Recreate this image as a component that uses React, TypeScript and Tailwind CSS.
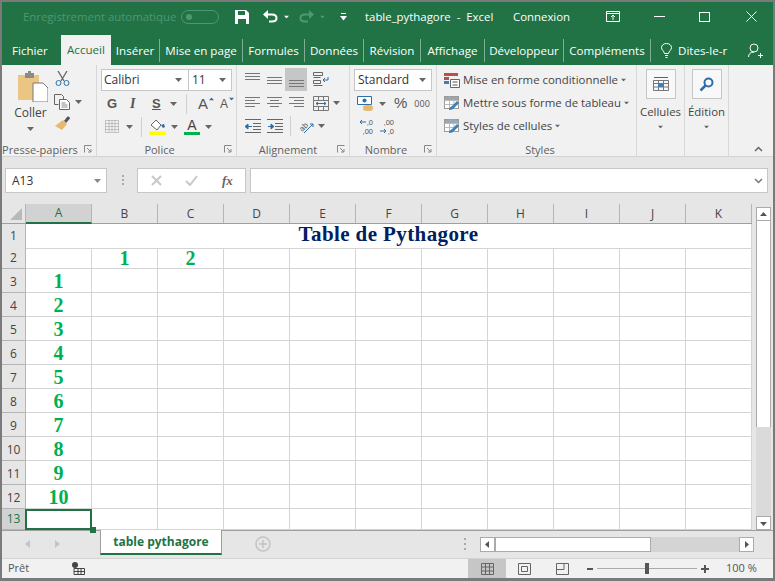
import React from "react";

const ui = "font-['Open_Sans','Noto_Sans',sans-serif]";

const Caret = ({ className = "", color = "#666" }: { className?: string; color?: string }) => (
  <svg width="7" height="4" viewBox="0 0 7 4" className={`shrink-0 ${className}`}>
    <path d="M0 0h7L3.5 4z" fill={color} />
  </svg>
);

const Lines = ({ kind }: { kind: "left" | "center" | "right" | "top" | "middle" | "bottom" }) => {
  const rows: [number, number][] =
    kind === "left"
      ? [[0, 15], [0, 10], [0, 15], [0, 10]]
      : kind === "center"
        ? [[0, 15], [3, 12], [0, 15], [3, 12]]
        : kind === "right"
          ? [[0, 15], [5, 15], [0, 15], [5, 15]]
          : [[0, 15], [0, 15], [0, 15]];
  const start = kind === "top" ? 0 : kind === "middle" ? 4 : kind === "bottom" ? 7 : 1;
  return (
    <svg width="15" height="14" viewBox="0 0 15 14">
      {rows.map(([a, b], i) => (
        <path key={i} d={`M${a} ${start + i * 3 + 0.5}H${b}`} stroke="#777" strokeWidth="1" />
      ))}
    </svg>
  );
};

const Indent = ({ flip }: { flip?: boolean }) => (
  <svg width="16" height="14" viewBox="0 0 16 14">
    <path d="M0 .5h16M8 4.500h8M8 7.500h8M8 10.500h8M0 13.500h16" stroke="#666" />
    <path d={flip ? "M1 7.500h4M7 7.500 4 5v5z" : "M3 7.500h4M0 7.500 3 5v5z"} stroke="#2b6ea8" fill="#2b6ea8" />
  </svg>
);

const StyleIcon = () => (
  <svg width="16" height="16" viewBox="0 0 16 16" className="shrink-0">
    <rect x=".5" y="1.500" width="14" height="12" fill="#fff" stroke="#999" />
    <path d="M.5 5.500h14M.5 9.500h14M5.500 1.500v12M10 1.500v12" stroke="#bbb" />
    <path d="M1 2h13v3H1z" fill="#9aa7b5" />
    <path d="M5 15c0-3 2-3 3-4l5-5 2 2-5 5c-1 1-2 2-5 2z" fill="#3f7fb5" />
  </svg>
);

const GroupLabel = ({ children, launcher }: { children: React.ReactNode; launcher?: boolean }) => (
  <div className={`relative mt-auto flex h-[14px] items-center justify-center text-[11px] leading-none text-[#5f5f5f] ${launcher ? "pr-[18px]" : ""}`}>
    <span className="whitespace-nowrap">{children}</span>
    {launcher && (
      <svg width="8" height="8" viewBox="0 0 8 8" className="absolute right-[4px] top-[3px]">
        <path d="M.5 7.500v-7h7M3 3l4 4M7 4v3H4" fill="none" stroke="#888" />
      </svg>
    )}
  </div>
);

const cols = ["A", "B", "C", "D", "E", "F", "G", "H", "I", "J", "K"];
const rowHeights = [24, 21, 24, 24, 24, 24, 24, 24, 24, 24, 24, 24, 21];

function TitleBar() {
  return (
    <div className="flex h-[31px] items-center bg-[#217346] pb-[2px] text-[11.4px] text-white">
      <span className="ml-[21px] w-[151px] shrink-0 whitespace-nowrap text-[#4f9672]">Enregistrement automatique</span>
      <div className="ml-[7px] flex h-[14px] w-[38px] items-center rounded-full border border-[#4f9672] pl-[4px]">
        <div className="h-[6px] w-[6px] rounded-full bg-[#4f9672]" />
      </div>
      <svg width="14" height="14" viewBox="0 0 14 14" className="ml-[16px]">
        <path d="M0 0h11l3 3v11H0z" fill="#fff" />
        <path d="M3 1h7v4H3zM3 9h8v5H3z" fill="#217346" />
      </svg>
      <svg width="15" height="13" viewBox="0 0 15 13" className="ml-[14px]">
        <path d="M1 4.500h8c3 0 4.500 1.500 4.500 3.500S12 11.500 9 11.500H6" fill="none" stroke="#fff" strokeWidth="2" />
        <path d="M5 0v9L0 4.500z" fill="#fff" />
      </svg>
      <Caret color="#fff" className="ml-[5px] scale-75" />
      <svg width="15" height="13" viewBox="0 0 15 13" className="ml-[9px]">
        <path d="M14 4.500H6C3 4.500 1.500 6 1.500 8S3 11.500 6 11.500h3" fill="none" stroke="#4f9672" strokeWidth="2" />
        <path d="M10 0v9l5-4.500z" fill="#4f9672" />
      </svg>
      <Caret color="#4f9672" className="ml-[5px] scale-75" />
      <svg width="7" height="8" viewBox="0 0 7 8" className="ml-[14px]">
        <path d="M1 .5h5" stroke="#fff" />
        <path d="M0 3h7L3.500 7.500z" fill="#fff" />
      </svg>
      <span className="ml-[18px] w-[128px] shrink-0 whitespace-pre">table_pythagore  -  Excel</span>
      <span className="ml-[20px] w-[57px] shrink-0">Connexion</span>
      <svg width="14" height="11" viewBox="0 0 14 11" className="ml-[36px]">
        <path d="M.5.500h13v10H.5zM.5 2.500h13" fill="none" stroke="#fff" />
        <path d="M7 9V4.500M5 6l2-2 2 2" fill="none" stroke="#fff" />
      </svg>
      <div className="ml-[34px] h-px w-[11px] bg-white" />
      <div className="ml-[34px] h-[10px] w-[11px] border border-white" />
      <svg width="11" height="11" viewBox="0 0 11 11" className="ml-[36px]">
        <path d="M.5.500l10 10M10.500.500l-10 10" stroke="#fff" />
      </svg>
    </div>
  );
}

const tabs: [string, string][] = [
  ["Insérer", "w-[49px]"],
  ["Mise en page", "w-[83px]"],
  ["Formules", "w-[62px]"],
  ["Données", "w-[59px]"],
  ["Révision", "w-[57px]"],
  ["Affichage", "w-[64px]"],
  ["Développeur", "w-[79px]"],
  ["Compléments", "w-[87px]"],
];

function TabBar() {
  return (
    <div className="flex h-[32px] items-end bg-[#217346] text-[11.6px] text-white">
      <div className="flex h-[26px] w-[59px] shrink-0 items-center pb-[3px] pl-[10px]">Fichier</div>
      <div className="flex h-[30px] w-[50px] shrink-0 items-center justify-center bg-[#f1f1f1] text-[#217346]">Accueil</div>
      {tabs.map(([t, w]) => (
        <div key={t} className={`flex h-[26px] shrink-0 items-center pb-[3px] ${w}`}>
          <span className="flex-1 whitespace-nowrap text-center">{t}</span>
          <div className="h-[23px] w-px bg-[#7fae96]" />
        </div>
      ))}
      <div className="flex h-[26px] items-center pb-[3px]">
        <svg width="11" height="15" viewBox="0 0 11 15" className="ml-[10px]">
          <path d="M3.500 10.500C3 8 .5 7 .5 4.500a5 4 0 0 1 10 0C10.500 7 8 8 7.500 10.500zM4 12.500h3M4.500 14.500h2" fill="none" stroke="#fff" />
        </svg>
        <span className="ml-[6px] w-[50px] whitespace-nowrap">Dites-le-r</span>
        <svg width="15" height="16" viewBox="0 0 15 16" className="ml-[20px]">
          <circle cx="6" cy="5" r="4" fill="none" stroke="#fff" />
          <path d="M.5 14c0-3 2-5 5.500-5M10 12.500h5M12.500 10v5" fill="none" stroke="#fff" />
        </svg>
      </div>
    </div>
  );
}

function Clipboard() {
  return (
    <div className="flex w-[95px] flex-col border-r border-[#d8d8d8]">
      <div className="flex pl-[11px] pt-[6px]">
        <div className="flex w-[35px] flex-col items-center">
          <svg width="30" height="31" viewBox="0 0 30 31" className="ml-[4px]">
            <path d="M0 4h21v25H0z" fill="#eac583" />
            <path d="M7 2h3v-2h3v2h3v5H7z" fill="#8a8a8a" />
            <path d="M15 12h10l5 5v14H15z" fill="#fff" stroke="#777" />
          </svg>
          <span className="mt-[3px] text-[12px] leading-[16px] text-[#444]">Coller</span>
          <Caret className="mt-[6px]" />
        </div>
        <div className="ml-[6px] flex flex-col">
          <svg width="15" height="15" viewBox="0 0 15 15" className="ml-[1px]">
            <path d="M3 0l6 10M12 0 6 10" stroke="#666" strokeWidth="1.300" />
            <circle cx="3.500" cy="12" r="2.500" fill="none" stroke="#2b6ea8" />
            <circle cx="11.500" cy="12" r="2.500" fill="none" stroke="#2b6ea8" />
          </svg>
          <div className="mt-[8px] flex items-center">
            <svg width="16" height="16" viewBox="0 0 16 16">
              <path d="M.5.500h7l2 2v3M.5.500v10h4" fill="none" stroke="#666" />
              <path d="M5.500 5.500h7l3 3v7h-10z" fill="#fff" stroke="#666" />
              <path d="M7.500 9h4M7.500 11h6M7.500 13h6" stroke="#888" />
            </svg>
            <Caret className="ml-[5px]" />
          </div>
          <svg width="16" height="15" viewBox="0 0 16 15" className="ml-[1px] mt-[6px]">
            <path d="M9 5l3-4c1-1 3 0 3 1.500L11 7z" fill="#555" />
            <path d="M8 4l4 4-5 6-7-4z" fill="#e6b870" />
          </svg>
        </div>
      </div>
      <GroupLabel launcher>Presse-papiers</GroupLabel>
    </div>
  );
}

function Font() {
  return (
    <div className="flex w-[140px] flex-col border-r border-[#d8d8d8] pl-[4px]">
      <div className="mt-[4px] flex h-[22px] w-[131px] border border-[#c6c6c6] bg-white text-[12px] text-[#333]">
        <div className="flex w-[87px] items-center justify-between border-r border-[#c6c6c6] pl-[2px] pr-[6px]">
          Calibri
          <Caret />
        </div>
        <div className="flex flex-1 items-center justify-between pl-[3px] pr-[5px]">
          11
          <Caret />
        </div>
      </div>
      <div className="mt-[2px] flex h-[21px] items-center font-['Liberation_Sans',sans-serif] text-[#555]">
        <span className="ml-[6px] w-[21px] text-[13px] font-bold">G</span>
        <span className="ml-[2px] w-[22px] font-['Liberation_Serif',serif] text-[14px] font-bold italic">I</span>
        <span className="w-[18px] text-[13px] font-bold underline">S</span>
        <Caret />
        <div className="ml-[9px] h-[20px] w-px bg-[#d0d0d0]" />
        <span className="ml-[11px] text-[15px] leading-none">A</span>
        <Caret color="#2b6ea8" className="-mt-[9px] rotate-180 scale-75" />
        <span className="ml-[5px] text-[12px] leading-none">A</span>
        <Caret color="#2b6ea8" className="-mt-[9px] scale-75" />
      </div>
      <div className="mt-[2px] flex h-[21px] items-center">
        <svg width="14" height="13" viewBox="0 0 14 13" className="ml-[4px]">
          <path d="M.5.500h13v12H.5zM7 .5v12M.5 6.500h13M4 .5v12M10 .5v12M.5 3.500h13M.5 9.500h13" fill="none" stroke="#999" strokeDasharray="1 1" />
        </svg>
        <Caret className="ml-[7px]" />
        <div className="ml-[8px] h-[20px] w-px bg-[#d0d0d0]" />
        <svg width="18" height="16" viewBox="0 0 18 16" className="ml-[7px]">
          <path d="M2 6l5-5 5 5-4 5z" fill="#fff" stroke="#666" />
          <path d="M12 6l3-1 1 3-2 1z" fill="#2b6ea8" />
          <path d="M0 12.500h17V16H0z" fill="#ffff00" />
        </svg>
        <Caret className="ml-[4px]" />
        <div className="ml-[6px] flex w-[16px] flex-col items-center">
          <span className="font-['Liberation_Sans',sans-serif] text-[14px] leading-[13px] text-[#444]">A</span>
          <div className="h-[3px] w-[16px] bg-[#00b050]" />
        </div>
        <Caret className="ml-[5px]" />
      </div>
      <GroupLabel launcher>Police</GroupLabel>
    </div>
  );
}

function Alignment() {
  return (
    <div className="flex w-[113px] flex-col border-r border-[#d8d8d8] pl-[8px]">
      <div className="mt-[3px] flex h-[23px] items-center">
        <Lines kind="top" />
        <div className="ml-[7px]"><Lines kind="middle" /></div>
        <div className="ml-[3px] flex h-[23px] w-[22px] items-center justify-center bg-[#c6c6c6]"><Lines kind="bottom" /></div>
        <svg width="16" height="15" viewBox="0 0 16 15" className="ml-[6px]">
          <path d="M.5.500h9v3h-9zM.5 5.500h7M.5 8.500h7v3h-7zM.5 13.500h9" fill="none" stroke="#666" />
          <path d="M15 5v3h-5M12 6 10 8l2 2" fill="none" stroke="#2b6ea8" />
        </svg>
      </div>
      <div className="mt-[1px] flex h-[22px] items-center">
        <Lines kind="left" />
        <div className="ml-[7px]"><Lines kind="center" /></div>
        <div className="ml-[7px]"><Lines kind="right" /></div>
        <svg width="16" height="15" viewBox="0 0 16 15" className="ml-[9px]">
          <path d="M.5.500h15v14H.5zM.5 4.500h15M.5 10.500h15M5.500 .5v4M10.500 .5v4M5.500 10.500v4M10.500 10.500v4" fill="none" stroke="#777" />
          <path d="M3 7.500h10M5 6 3 7.500 5 9M11 6l2 1.500L11 9" fill="none" stroke="#2b6ea8" />
        </svg>
        <Caret className="ml-[4px]" />
      </div>
      <div className="mt-[1px] flex h-[22px] items-center">
        <Indent />
        <div className="ml-[6px]"><Indent flip /></div>
        <div className="ml-[7px] h-[20px] w-px bg-[#d0d0d0]" />
        <svg width="16" height="15" viewBox="0 0 16 15" className="ml-[7px] overflow-visible">
          <text x="1" y="11" fontSize="8" fontFamily="Liberation Sans" fill="#555" transform="rotate(-45 5 8)">ab</text>
          <path d="M6 14 15 5M12 5h3v3" fill="none" stroke="#2b6ea8" />
        </svg>
        <Caret className="ml-[4px]" />
      </div>
      <GroupLabel launcher>Alignement</GroupLabel>
    </div>
  );
}

function DecimalIcon({ more }: { more?: boolean }) {
  const arrow = (
    <svg width="7" height="6" viewBox="0 0 7 6" className="mr-px">
      <path d={more ? "M0 3h6M4 1l2 2-2 2" : "M7 3H1M3 1 1 3l2 2"} fill="none" stroke="#2b6ea8" />
    </svg>
  );
  return (
    <div className="flex w-[15px] flex-col items-end font-['Liberation_Sans',sans-serif] text-[7.5px] leading-[9px] text-[#555]">
      <div className="flex items-center">{!more && arrow}{more ? ",00" : ",0"}</div>
      <div className="flex items-center">{more && arrow}{more ? ",0" : ",00"}</div>
    </div>
  );
}

function NumberGroup() {
  return (
    <div className="flex w-[87px] flex-col border-r border-[#d8d8d8] pl-[4px]">
      <div className="mt-[4px] flex h-[22px] w-[78px] items-center justify-between border border-[#c6c6c6] bg-white pl-[3px] pr-[5px] text-[12px] text-[#333]">
        Standard
        <Caret />
      </div>
      <div className="mt-[2px] flex h-[21px] items-center">
        <svg width="17" height="15" viewBox="0 0 17 15" className="ml-[3px]">
          <path d="M.5.500h14v8H.5z" fill="#fff" stroke="#2b6ea8" />
          <circle cx="7.500" cy="4.500" r="2" fill="#2b6ea8" />
          <ellipse cx="11" cy="11" rx="5" ry="2" fill="#e6b870" />
          <ellipse cx="11" cy="13" rx="5" ry="2" fill="#e6b870" />
        </svg>
        <Caret className="ml-[5px]" />
        <span className="ml-[8px] font-['Liberation_Sans',sans-serif] text-[15px] text-[#555]">%</span>
        <span className="ml-[7px] text-[9px] text-[#555]">000</span>
      </div>
      <div className="mt-[2px] flex h-[21px] items-center">
        <div className="ml-[4px]"><DecimalIcon /></div>
        <div className="ml-[6px]"><DecimalIcon more /></div>
      </div>
      <GroupLabel launcher>Nombre</GroupLabel>
    </div>
  );
}

function Styles() {
  return (
    <div className="flex w-[200px] flex-col border-r border-[#d8d8d8] pl-[7px] text-[11.4px] text-[#444]">
      {["Mise en forme conditionnelle", "Mettre sous forme de tableau", "Styles de cellules"].map((t, i) => (
        <div key={t} className={`flex h-[23px] items-center whitespace-nowrap ${i === 0 ? "mt-[3px]" : ""}`}>
          {i === 0 ? (
            <svg width="16" height="16" viewBox="0 0 16 16" className="shrink-0">
              <path d="M0 1h14v3H0z" fill="#b5524a" />
              <path d="M0 5h5v3H0z" fill="#b5524a" />
              <path d="M0 9h5v3H0z" fill="#3f7fb5" />
              <path d="M6.500 7.500h9v8h-9z" fill="#fff" stroke="#666" />
              <path d="M8.500 10h5M8.500 13h5" stroke="#555" />
            </svg>
          ) : (
            <StyleIcon />
          )}
          <span className="ml-[3px]">{t}</span>
          <Caret className="ml-[2px] scale-75" />
        </div>
      ))}
      <GroupLabel>Styles</GroupLabel>
    </div>
  );
}

const BigButton = ({ label, width, children }: { label: string; width: string; children: React.ReactNode }) => (
  <div className={`flex flex-col items-center border-r border-[#d8d8d8] ${width}`}>
    <div className="mt-[4px] flex h-[30px] w-[30px] items-center justify-center border border-[#c6c6c6] bg-[#f8f8f8]">{children}</div>
    <span className="mt-[5px] whitespace-nowrap text-[11.4px] leading-[16px] text-[#444]">{label}</span>
    <Caret className="mt-[5px] scale-75" />
  </div>
);

function Ribbon() {
  return (
    <div className={`flex h-[92px] border-b border-[#d4d4d4] bg-[#f1f1f1] ${ui}`}>
      <Clipboard />
      <Font />
      <Alignment />
      <NumberGroup />
      <Styles />
      <BigButton label="Cellules" width="w-[48px]">
        <svg width="16" height="16" viewBox="0 0 16 16">
          <path d="M.5 4.500h15v10H.5zM.5 7.500h15M.5 11h15M5.500 4.500v10M10.500 4.500v10" fill="none" stroke="#777" />
          <path d="M5 7.500h6V11H5z" fill="#3f7fb5" />
          <path d="M1 1.500h14" stroke="#2b6ea8" />
        </svg>
      </BigButton>
      <BigButton label="Édition" width="w-[44px]">
        <svg width="15" height="15" viewBox="0 0 15 15">
          <circle cx="9.500" cy="5.500" r="4" fill="none" stroke="#2b6ea8" strokeWidth="2" />
          <path d="M6.500 8.500 1.500 13.500" stroke="#2b6ea8" strokeWidth="2.500" />
        </svg>
      </BigButton>
      <div className="flex flex-1 items-end justify-end pb-[4px] pr-[10px]">
        <svg width="9" height="6" viewBox="0 0 9 6">
          <path d="M1 5l3.500-3.500L8 5" fill="none" stroke="#666" strokeWidth="1.500" />
        </svg>
      </div>
    </div>
  );
}

function FormulaBar() {
  return (
    <div className={`flex h-[47px] items-start bg-[#e6e6e6] pl-[3px] pt-[11px] ${ui}`}>
      <div className="flex h-[25px] w-[102px] items-center justify-between border border-[#c6c6c6] bg-white pl-[6px] pr-[5px] text-[12px] text-[#333]">
        A13
        <Caret color="#888" />
      </div>
      <div className="ml-[15px] mt-[7px] flex h-[10px] w-[2px] flex-col justify-between">
        <div className="h-[2px] bg-[#aaa]" />
        <div className="h-[2px] bg-[#aaa]" />
        <div className="h-[2px] bg-[#aaa]" />
      </div>
      <div className="ml-[13px] flex h-[25px] w-[109px] items-center border border-[#c6c6c6] bg-white">
        <svg width="11" height="11" viewBox="0 0 11 11" className="ml-[13px]">
          <path d="M1 1l9 9M10 1l-9 9" stroke="#c8c8c8" strokeWidth="2" />
        </svg>
        <svg width="13" height="11" viewBox="0 0 13 11" className="ml-[23px]">
          <path d="M1 6l4 4 7-9" fill="none" stroke="#c8c8c8" strokeWidth="2" />
        </svg>
        <span className="ml-[24px] font-['Liberation_Serif',serif] text-[13px] font-bold italic text-[#666]">fx</span>
      </div>
      <div className="ml-[4px] flex h-[25px] w-[518px] items-center justify-end border border-[#c6c6c6] bg-white pr-[4px]">
        <svg width="9" height="6" viewBox="0 0 9 6">
          <path d="M1 1l3.500 3.500L8 1" fill="none" stroke="#777" strokeWidth="1.500" />
        </svg>
      </div>
    </div>
  );
}

const ScrollBtn = ({ dir, className = "" }: { dir: "up" | "down" | "left" | "right"; className?: string }) => (
  <div className={`flex w-[15px] shrink-0 items-center justify-center border border-[#ababab] bg-white ${className}`}>
    <svg width="7" height="7" viewBox="0 0 7 7">
      <path
        d={
          dir === "up"
            ? "M0 5h7L3.500 1z"
            : dir === "down"
              ? "M0 2h7L3.500 6z"
              : dir === "left"
                ? "M5 0v7L1 3.500z"
                : "M2 0v7l4-3.500z"
        }
        fill="#555"
      />
    </svg>
  </div>
);

function Sheet() {
  const num = "font-['Liberation_Serif',serif] text-[20px] leading-none font-bold text-[#00b050]";
  return (
    <div className="flex h-[326px] bg-[#e6e6e6]">
      <div className={`w-[750px] ${ui}`}>
        <div className="grid h-[20px] grid-cols-[24px_repeat(11,66px)] border-b border-[#9f9f9f] text-[12px] text-[#444]">
          <div className="flex items-end justify-end border-r border-[#b5b5b5] p-[3px]">
            <svg width="12" height="12" viewBox="0 0 12 12"><path d="M12 0v12H0z" fill="#b9b9b9" /></svg>
          </div>
          {cols.map((c, i) => (
            <div
              key={c}
              className={
                i === 0
                  ? "-mb-px flex items-center justify-center border-b-2 border-r border-b-[#217346] border-r-[#b5b5b5] bg-[#d2d2d2] text-[#217346]"
                  : "flex items-center justify-center border-r border-[#b5b5b5]"
              }
            >
              {c}
            </div>
          ))}
        </div>
        {rowHeights.map((h, r) => (
          <div
            key={r}
            style={{ height: h }}
            className="grid grid-cols-[24px_repeat(11,66px)] bg-white"
          >
            <div className={`flex items-center justify-center border-b border-r border-[#b5b5b5] text-[12px] leading-none ${r === 12 ? "bg-[#d2d2d2] text-[#217346]" : "bg-[#e6e6e6] text-[#444]"} ${r >= 2 && r <= 11 ? "pt-[3px]" : ""}`}>
              {r + 1}
            </div>
            {r === 0 ? (
              <div className="col-span-11 flex items-center justify-center border-b border-r border-[#d4d4d4] pb-[3px] font-['Liberation_Serif',serif] text-[21px] font-bold leading-none tracking-[0.4px] text-[#002060]">
                Table de Pythagore
              </div>
            ) : (
              cols.map((c, i) => {
                const selected = r === 12 && i === 0;
                let text = "";
                if (r === 1 && i === 1) text = "1";
                if (r === 1 && i === 2) text = "2";
                if (r >= 2 && r <= 11 && i === 0) text = String(r - 1);
                return (
                  <div
                    key={c}
                    className={`flex items-center justify-center ${num} ${selected ? "-ml-px border-2 border-[#217346]" : "border-b border-r border-[#d4d4d4]"}`}
                  >
                    {text}
                  </div>
                );
              })
            )}
          </div>
        ))}
      </div>
      <div className="ml-[4px] flex w-[15px] flex-col pt-[3px]">
        <ScrollBtn dir="up" className="h-[14px]" />
        <div className="h-[206px] border-x border-[#ababab] bg-white" />
        <div className="flex-1 bg-[#dadada]" />
        <ScrollBtn dir="down" className="h-[14px]" />
      </div>
    </div>
  );
}

function SheetTabs() {
  return (
    <div className={`relative flex h-[28px] items-start border-t border-[#9f9f9f] bg-[#e6e6e6] ${ui}`}>
      <div className="absolute -top-[4px] left-[88px] h-[6px] w-[6px] bg-[#217346]" />
      <svg width="36" height="8" viewBox="0 0 36 8" className="ml-[23px] mt-[9px]">
        <path d="M5 0v8L0 4zM30 0v8l5-4z" fill="#c4c4c4" />
      </svg>
      <div className="ml-[39px] -mt-px flex h-[25px] w-[122px] items-center justify-center border-x border-b-2 border-x-[#9f9f9f] border-b-[#217346] bg-white text-[12px] font-bold text-[#217346]">
        table pythagore
      </div>
      <svg width="16" height="16" viewBox="0 0 16 16" className="ml-[33px] mt-[5px]">
        <circle cx="8" cy="8" r="7" fill="none" stroke="#c4c4c4" strokeWidth="1.500" />
        <path d="M8 4v8M4 8h8" stroke="#c4c4c4" strokeWidth="1.500" />
      </svg>
      <div className="ml-[193px] mt-[7px] flex h-[12px] w-[2px] flex-col justify-between">
        <div className="h-[2px] bg-[#aaa]" />
        <div className="h-[2px] bg-[#aaa]" />
        <div className="h-[2px] bg-[#aaa]" />
      </div>
      <div className="ml-[14px] mt-[6px] flex">
        <ScrollBtn dir="left" className="h-[15px]" />
        <div className="h-[15px] w-[156px] border border-[#ababab] bg-white" />
        <div className="h-[15px] w-[88px] bg-[#d4d4d4]" />
        <ScrollBtn dir="right" className="h-[15px]" />
      </div>
    </div>
  );
}

function StatusBar() {
  return (
    <div className={`flex h-[20px] items-center border-t border-[#d4d4d4] bg-[#f1f1f1] text-[11px] text-[#555] ${ui}`}>
      <span className="ml-[6px] w-[62px]">Prêt</span>
      <svg width="13" height="13" viewBox="0 0 13 13" className="ml-[2px]">
        <circle cx="3" cy="3" r="3" fill="#444" />
        <path d="M2 6.500h10.500v6H2zM2 9.500h10.500M6 6.500v6M9 6.500v6" fill="none" stroke="#444" />
      </svg>
      <div className="ml-[383px] flex h-full w-[38px] items-center justify-center bg-[#c6c6c6]">
        <svg width="13" height="12" viewBox="0 0 13 12">
          <path d="M.5.500h12v11H.5zM4.500.5v11M8.500.5v11M.5 4h12M.5 8h12" fill="none" stroke="#666" />
        </svg>
      </div>
      <svg width="13" height="12" viewBox="0 0 13 12" className="ml-[12px]">
        <path d="M.5.500h12v11H.5zM3.500 3.500h6v5h-6z" fill="none" stroke="#666" />
      </svg>
      <svg width="13" height="12" viewBox="0 0 13 12" className="ml-[25px]">
        <path d="M.5.500h12v11H.5zM.5 6.500h7.500V.5" fill="none" stroke="#666" />
      </svg>
      <div className="ml-[18px] h-[2px] w-[6px] bg-[#555]" />
      <div className="relative ml-[4px] h-px w-[100px] bg-[#aaa]">
        <div className="absolute -top-[5px] left-[48px] h-[11px] w-[4px] bg-[#555]" />
      </div>
      <svg width="8" height="8" viewBox="0 0 8 8" className="ml-[4px]">
        <path d="M4 0v8M0 4h8" stroke="#555" strokeWidth="2" />
      </svg>
      <span className="ml-[17px] whitespace-nowrap text-[11px]">100 %</span>
    </div>
  );
}

export default function App() {
  return (
    <div className="h-[581px] w-[775px] overflow-hidden bg-[#7a7a7a] pb-[3px] pl-[2px] pr-[2px] pt-[2px]">
      <div className={`flex h-[576px] flex-col ${ui}`}>
        <TitleBar />
        <TabBar />
        <Ribbon />
        <FormulaBar />
        <Sheet />
        <SheetTabs />
        <StatusBar />
      </div>
    </div>
  );
}
